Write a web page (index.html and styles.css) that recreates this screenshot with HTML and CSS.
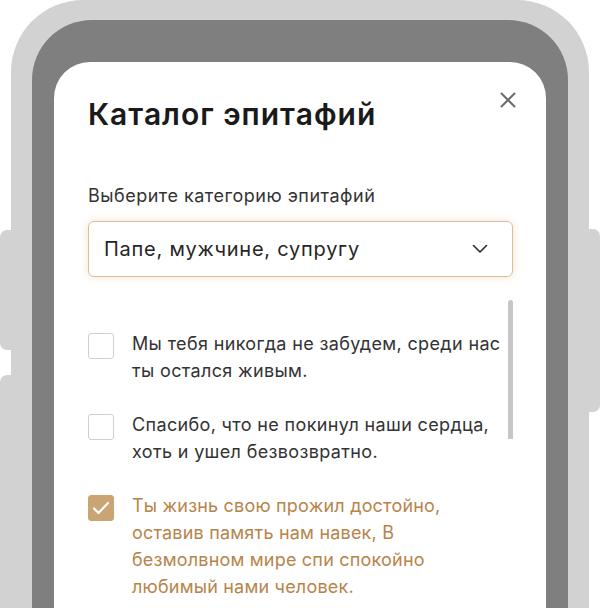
FILE: index.html
```html
<!DOCTYPE html>
<html lang="ru">

<head>
    <meta charset="UTF-8">
    <meta name="viewport" content="width=device-width, initial-scale=1.0">
    <title>Каталог эпитафий</title>
    <link rel="stylesheet" href="styles.css">
</head>

<body>
    <!-- side keys of the phone -->
    <span class="side-key key-left-1"></span>
    <span class="side-key key-left-2"></span>
    <span class="side-key key-right"></span>

    <div class="device">
        <div class="bezel">
            <div class="screen">
                <div class="modal-header">
                    <h1>Каталог эпитафий</h1>
                    <button class="close-button" aria-label="Закрыть">
                        <svg width="16" height="16" viewBox="0 0 16 16">
                            <path d="M1.5 1.5 L14.5 14.5 M14.5 1.5 L1.5 14.5" stroke="#6b6b6b" stroke-width="2" stroke-linecap="round" fill="none" />
                        </svg>
                    </button>
                </div>

                <label class="field-label" for="category">Выберите категорию эпитафий</label>
                <div class="select" id="category">
                    <span>Папе, мужчине, супругу</span>
                    <svg width="16" height="10" viewBox="0 0 16 10">
                        <path d="M1.5 1.5 L8 8 L14.5 1.5" stroke="#2b2b2b" stroke-width="1.6" stroke-linecap="round" stroke-linejoin="round" fill="none" />
                    </svg>
                </div>

                <div class="epitaph-list">
                    <div class="scroll-thumb"></div>

                    <label class="epitaph">
                        <span class="checkbox"></span>
                        <span class="epitaph-text">Мы тебя никогда не забудем, среди нас<br>ты остался живым.</span>
                    </label>

                    <label class="epitaph">
                        <span class="checkbox"></span>
                        <span class="epitaph-text">Спасибо, что не покинул наши сердца,<br>хоть и ушел безвозвратно.</span>
                    </label>

                    <label class="epitaph checked">
                        <span class="checkbox">
                            <svg width="18" height="14" viewBox="0 0 18 14">
                                <path d="M2 7.5 L6.5 12 L16 2" stroke="#fff" stroke-width="2.2" stroke-linecap="round" stroke-linejoin="round" fill="none" />
                            </svg>
                        </span>
                        <span class="epitaph-text">Ты жизнь свою прожил достойно,<br>оставив память нам навек, В<br>безмолвном мире спи спокойно<br>любимый нами человек.</span>
                    </label>
                </div>
            </div>
        </div>
    </div>
</body>

</html>
```

FILE: styles.css
```css
* {
    box-sizing: border-box;
}

body {
    font-family: 'Inter', 'Noto Sans', sans-serif;
    margin: 0;
    padding: 0;
    width: 600px;
    height: 608px;
    overflow: hidden;
    background: #fff;
    position: relative;
}

/* phone frame */

.device {
    margin-left: 11px;
    width: 578px;
    height: 680px;
    padding: 20px 21px 0 21px;
    background: #d2d2d2;
    border-radius: 72px 72px 0 0;
}

.bezel {
    height: 100%;
    padding: 42px 22px 0 22px;
    background: #7f7f7f;
    border-radius: 60px 60px 0 0;
}

.screen {
    height: 100%;
    padding: 34px 33px 0 34px;
    background: #fff;
    border-radius: 36px 36px 0 0;
}

.side-key {
    position: absolute;
    width: 11px;
    background: #d2d2d2;
}

.key-left-1 {
    left: 0;
    top: 230px;
    height: 120px;
    border-radius: 7px 0 0 7px;
}

.key-left-2 {
    left: 0;
    top: 375px;
    height: 260px;
    border-radius: 7px 0 0 7px;
}

.key-right {
    right: 0;
    top: 229px;
    height: 183px;
    border-radius: 0 7px 7px 0;
}

/* modal */

.modal-header {
    display: flex;
    justify-content: space-between;
    align-items: flex-start;
}

h1 {
    margin: 0;
    font-size: 30px;
    line-height: 36px;
    font-weight: 600;
    letter-spacing: 1px;
    color: #1a1a1a;
}

.close-button {
    width: 24px;
    height: 24px;
    margin: -8px -7px 0 0;
    padding: 0;
    border: none;
    background: transparent;
    display: flex;
    align-items: center;
    justify-content: center;
    cursor: pointer;
}

.field-label {
    display: block;
    margin-top: 52px;
    font-size: 18px;
    line-height: 24px;
    letter-spacing: 0.5px;
    color: #333;
}

.select {
    margin-top: 13px;
    height: 56px;
    padding: 0 24px 0 15px;
    display: flex;
    align-items: center;
    justify-content: space-between;
    border: 1px solid #d9bf97;
    border-radius: 6px;
    box-shadow: 0 0 8px rgba(214, 172, 112, 0.35);
    font-size: 20px;
    letter-spacing: 0.75px;
    color: #262626;
}

.epitaph-list {
    position: relative;
    margin-top: 23px;
    padding-top: 30px;
    display: flex;
    flex-direction: column;
    gap: 27px;
}

.scroll-thumb {
    position: absolute;
    top: 0;
    right: 0;
    width: 5px;
    height: 139px;
    border-radius: 3px 3px 0 0;
    background: #c6c6c6;
}

.epitaph {
    display: flex;
    align-items: flex-start;
    gap: 18px;
    font-size: 18px;
    line-height: 27px;
    letter-spacing: 0.35px;
    white-space: nowrap;
    color: #333;
    cursor: pointer;
}

.checkbox {
    flex: none;
    width: 26px;
    height: 26px;
    margin-top: 3px;
    border: 1px solid #cfcfcf;
    border-radius: 3px;
    display: flex;
    align-items: center;
    justify-content: center;
}

.epitaph.checked {
    letter-spacing: 0.2px;
    color: #b7844a;
}

.epitaph.checked .checkbox {
    border-color: #cba474;
    background: #cba474;
}
```
